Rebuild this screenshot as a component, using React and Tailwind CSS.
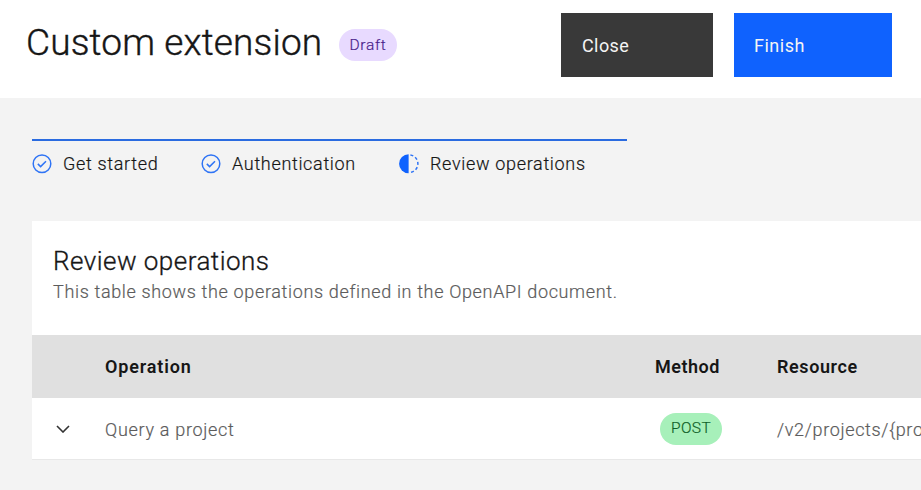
const steps = [
  { label: 'Get started', done: true, width: 'w-[169px]' },
  { label: 'Authentication', done: true, width: 'w-[198px]' },
  { label: 'Review operations', done: false, width: 'w-[228px]' },
];

function CompleteIcon() {
  return (
    <svg className="size-5 shrink-0" viewBox="0 0 20 20" fill="none" stroke="#2f74f5" strokeWidth="1.5">
      <circle cx="10" cy="9.7" r="8.8" />
      <path d="M5.8 9.9 8.6 12.6 14 7.2" />
    </svg>
  );
}

function CurrentIcon() {
  return (
    <svg className="size-5 shrink-0" viewBox="0 0 20 20" fill="none">
      <path d="M9.6 0.2a9.5 9.5 0 0 0 0 19Z" fill="#0f62fe" />
      <path
        d="M11.4 1a8.8 8.8 0 0 1 0 17.4"
        stroke="#2f74f5"
        strokeWidth="1.5"
        strokeDasharray="3 2.3"
      />
    </svg>
  );
}

function Chevron() {
  return (
    <svg className="h-2 w-[14px]" viewBox="0 0 14 8" fill="none" stroke="#333333" strokeWidth="1.6">
      <path d="M1 1 7 7l6-6" />
    </svg>
  );
}

export default function App() {
  return (
    <div className="h-[490px] w-[921px] overflow-hidden bg-[#f3f3f3] font-['Roboto','Liberation_Sans',sans-serif] text-[18px] text-[#161616]">
      <header className="flex h-[98px] items-start bg-white pl-[26px]">
        <h1 className="w-[313px] pt-[18px] text-[37px] leading-[50px] font-light tracking-[0.15px] whitespace-nowrap [-webkit-text-stroke:0.4px]">
          Custom extension
        </h1>
        <span className="mt-[29px] flex h-8 w-[58px] items-center justify-center rounded-full bg-[#e8daff] pt-px text-[15.5px] font-light tracking-[0.7px] text-[#491d8b] [-webkit-text-stroke:0.2px]">
          Draft
        </span>
        <button className="mt-[13px] ml-[164px] flex h-16 w-[152px] items-center bg-[#393939] pl-[21px] tracking-[0.4px] text-[#f4f4f4]">
          Close
        </button>
        <button className="mt-[13px] ml-[21px] flex h-16 w-[158px] items-center bg-[#0f62fe] pl-[20px] tracking-[0.5px] text-[#f4f4f4]">
          Finish
        </button>
      </header>

      <nav className="mt-[41px] ml-8 flex w-[595px] border-t-2 border-[#2a6be0] pt-[11px]">
        {steps.map((step) => (
          <div key={step.label} className={`flex shrink-0 items-center gap-[11px] ${step.width}`}>
            {step.done ? <CompleteIcon /> : <CurrentIcon />}
            <span className="leading-6 font-light tracking-[0.67px] whitespace-nowrap [-webkit-text-stroke:0.2px]">
              {step.label}
            </span>
          </div>
        ))}
      </nav>

      <main className="mt-[45px] ml-8 h-[239px] border-b border-[#e8e8e8] bg-white">
        <div className="h-[114px] pt-[22px] pl-[21px]">
          <h2 className="text-[26px] leading-9 font-light tracking-[0.47px] [-webkit-text-stroke:0.3px]">
            Review operations
          </h2>
          <p className="leading-[26px] font-light tracking-[0.65px] text-[#5c5c5c] [-webkit-text-stroke:0.2px]">
            This table shows the operations defined in the OpenAPI document.
          </p>
        </div>
        <div className="grid h-[63px] grid-cols-[73px_550px_122px_1fr] items-center bg-[#e0e0e0] font-semibold">
          <span />
          <span className="tracking-[0.85px]">Operation</span>
          <span className="tracking-[0.5px]">Method</span>
          <span className="tracking-[0.6px]">Resource</span>
        </div>
        <div className="grid h-[61px] grid-cols-[73px_550px_122px_1fr] items-center font-light text-[#5c5c5c] [-webkit-text-stroke:0.2px]">
          <span className="pl-6"><Chevron /></span>
          <span className="pt-0.5 tracking-[0.7px]">Query a project</span>
          <span className="ml-[5px] flex h-8 w-[62px] items-center justify-center rounded-full bg-[#a7f0ba] text-[15.5px] tracking-[0.4px] text-[#0e6027]">
            POST
          </span>
          <span className="pt-0.5 tracking-[0.65px] whitespace-nowrap">/v2/projects/&#123;pro</span>
        </div>
      </main>
    </div>
  );
}
